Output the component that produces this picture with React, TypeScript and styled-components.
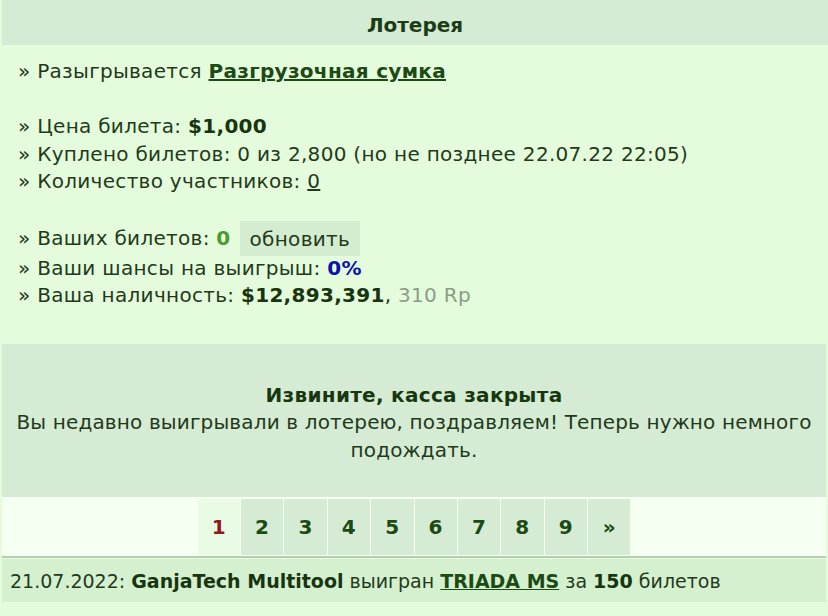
import React from "react";
import styled, { createGlobalStyle } from "styled-components";

const GlobalStyle = createGlobalStyle`
  html, body {
    margin: 0;
    padding: 0;
    background: #e4fcdc;
  }
  body {
    font-family: "DejaVu Sans", Verdana, sans-serif;
    font-size: 20px;
    letter-spacing: 0.3px;
    color: #1f3a1b;
  }
`;

const Panel = styled.div`
  width: 828px;
  background: #e4fcdc;
  padding: 0 2px;
  box-sizing: border-box;
`;

const Header = styled.div`
  height: 45px;
  margin: 0 -2px 0 0;
  padding-top: 4px;
  box-sizing: border-box;
  display: flex;
  align-items: center;
  justify-content: center;
  background: #d5ebd3;
  font-weight: bold;
  letter-spacing: 0;
  color: #1b3d16;
`;

const Info = styled.div`
  padding: 13px 16px 34px;
  line-height: 27.5px;
`;

const Line = styled.div<{ $tall?: boolean }>`
  display: flex;
  align-items: center;
  white-space: pre;
  height: ${(p) => (p.$tall ? "31.5px" : "27.5px")};
`;

const Gap = styled.div`
  height: 27.5px;
`;

const ItemLink = styled.a`
  font-weight: bold;
  color: #1c4a15;
  text-decoration: underline;
`;

const Value = styled.b<{ $tone?: "green" | "blue" }>`
  color: ${(p) =>
    p.$tone === "green" ? "#4b9a31" : p.$tone === "blue" ? "#0a14a8" : "#17350f"};
`;

const Counter = styled.span`
  text-decoration: underline;
`;

const Muted = styled.span`
  color: #8b9c88;
`;

const RefreshButton = styled.button`
  margin: -2px 0 -2px 9px;
  padding: 0 10px;
  height: 35px;
  border: none;
  background: #d4ecd0;
  font-family: inherit;
  font-size: 20px;
  letter-spacing: 0.3px;
  color: #1f3a1b;
  cursor: pointer;
`;

const Closed = styled.div`
  background: #d5ebd3;
  padding: 38px 4px 33px;
  text-align: center;
  line-height: 27.5px;
`;

const ClosedTitle = styled.div`
  font-weight: bold;
  color: #173710;
`;

const ClosedText = styled.div`
  letter-spacing: 0.15px;
`;

const Pager = styled.div`
  display: flex;
  justify-content: center;
  background: #f5fff2;
  padding: 2px 0 1px;
  border-bottom: 2px solid #b8ccb4;
`;

const PageCell = styled.a<{ $current?: boolean }>`
  width: 42.4px;
  height: 56px;
  margin-left: 1px;
  display: flex;
  align-items: center;
  justify-content: center;
  font-weight: bold;
  text-decoration: none;
  background: ${(p) => (p.$current ? "#eafbe5" : "#d5ebd3")};
  color: ${(p) => (p.$current ? "#8c1c1c" : "#1c4a15")};
  &:first-child {
    margin-left: 0;
  }
`;

const History = styled.div`
  margin-top: 1px;
  height: 43px;
  display: flex;
  align-items: center;
  padding: 0 8px;
  background: #d5f0cf;
  white-space: pre;
  font-size: 19px;
  letter-spacing: 0;
`;

const HistoryLink = styled.a`
  font-weight: bold;
  color: #1c4a15;
  text-decoration: underline;
`;

const pages = ["1", "2", "3", "4", "5", "6", "7", "8", "9", "»"];

export default function App() {
  return (
    <>
      <GlobalStyle />
      <Panel>
        <Header>Лотерея</Header>
        <Info>
          <Line>
            » Разыгрывается <ItemLink>Разгрузочная сумка</ItemLink>
          </Line>
          <Gap />
          <Line>
            » Цена билета: <Value>$1,000</Value>
          </Line>
          <Line>» Куплено билетов: 0 из 2,800 (но не позднее 22.07.22 22:05)</Line>
          <Line>
            » Количество участников: <Counter>0</Counter>
          </Line>
          <Gap />
          <Line $tall>
            » Ваших билетов: <Value $tone="green">0</Value>
            <RefreshButton>обновить</RefreshButton>
          </Line>
          <Line>
            » Ваши шансы на выигрыш: <Value $tone="blue">0%</Value>
          </Line>
          <Line>
            » Ваша наличность: <Value>$12,893,391</Value>, <Muted>310 Rp</Muted>
          </Line>
        </Info>
        <Closed>
          <ClosedTitle>Извините, касса закрыта</ClosedTitle>
          <ClosedText>
            Вы недавно выигрывали в лотерею, поздравляем! Теперь нужно немного
            подождать.
          </ClosedText>
        </Closed>
        <Pager>
          {pages.map((p, i) => (
            <PageCell key={p} $current={i === 0}>
              {p}
            </PageCell>
          ))}
        </Pager>
        <History>
          21.07.2022: <Value>GanjaTech Multitool</Value> выигран{" "}
          <HistoryLink>TRIADA MS</HistoryLink> за <Value>150</Value> билетов
        </History>
      </Panel>
    </>
  );
}
